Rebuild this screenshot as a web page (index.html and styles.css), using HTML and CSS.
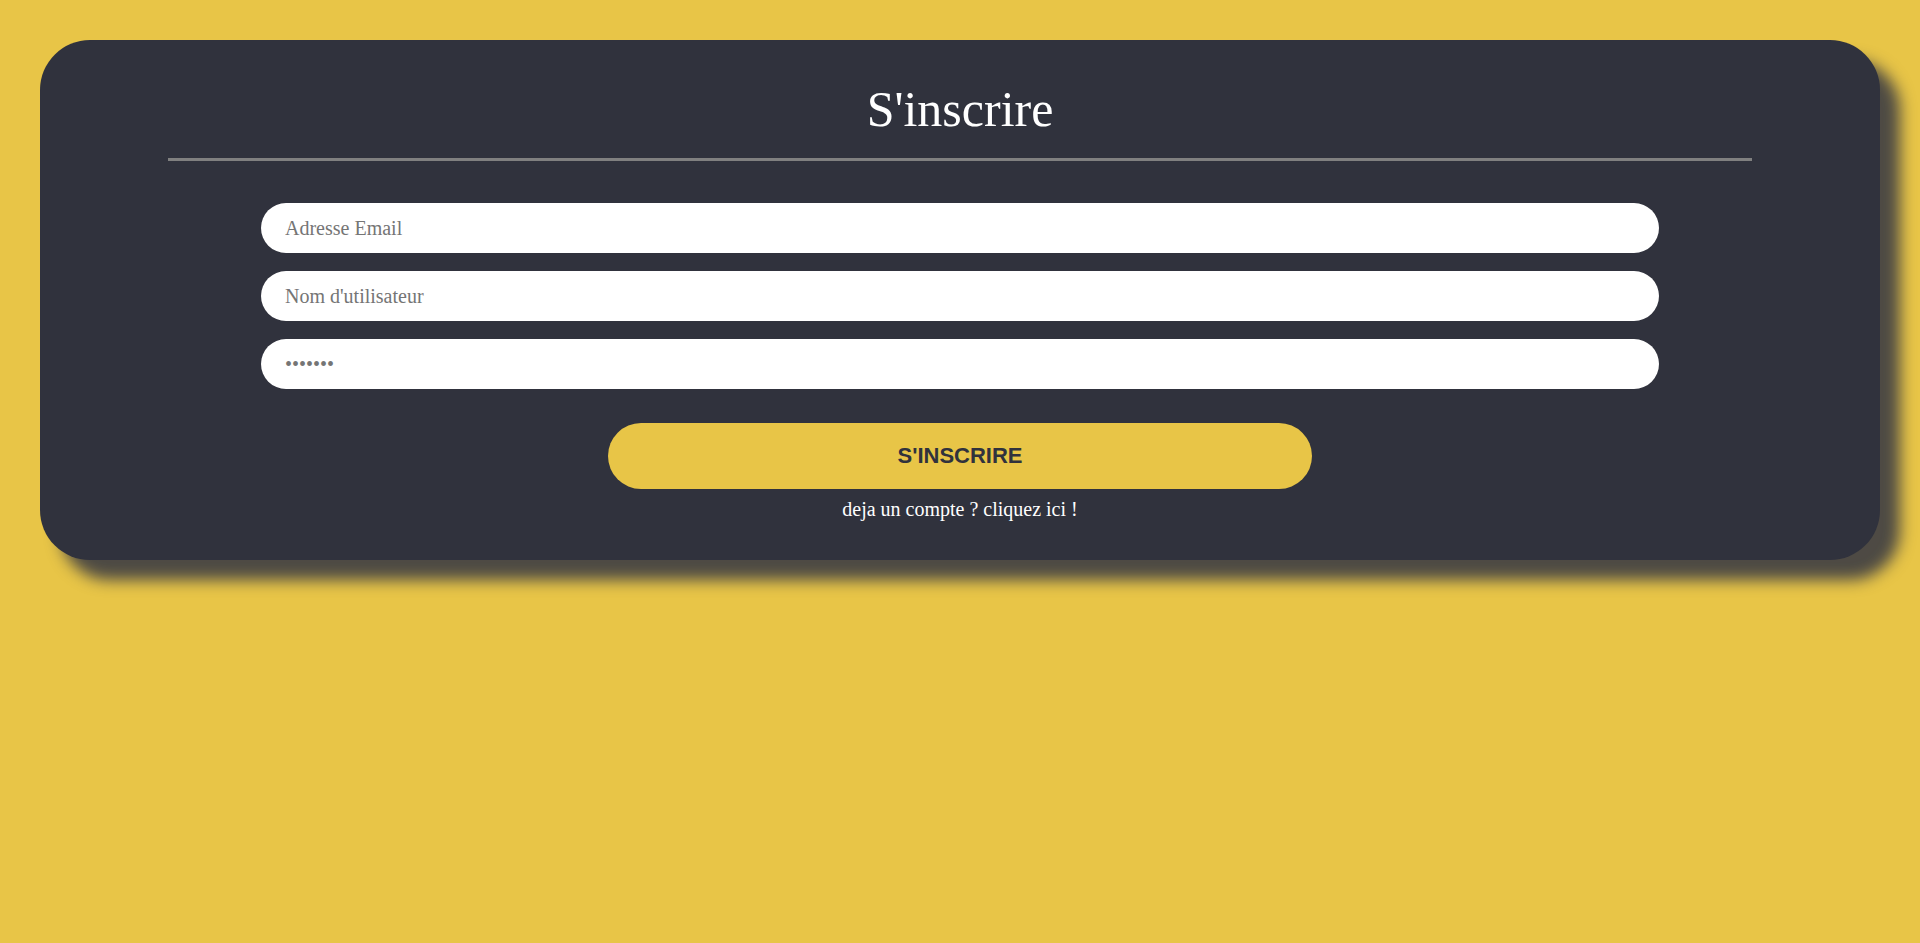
FILE: index.html
```html
<!DOCTYPE html>
<html lang="fr">
<head>
<meta charset="utf-8">
<title>S'inscrire</title>
<link rel="stylesheet" href="styles.css">
</head>
<body>
  <main class="card">
    <h1 class="title">S'inscrire</h1>
    <hr class="divider">
    <form class="form">
      <input class="field" type="email" placeholder="Adresse Email">
      <input class="field" type="text" placeholder="Nom d'utilisateur">
      <input class="field" type="password" placeholder="•••••••">
      <button class="submit" type="button">S'INSCRIRE</button>
      <a class="login-link" href="#">deja un compte ? cliquez ici !</a>
    </form>
  </main>
</body>
</html>
```

FILE: styles.css
```css
html, body {
  margin: 0;
  padding: 0;
}

body {
  background: #e8c547;
  padding: 40px;
  min-height: 943px;
  box-sizing: border-box;
  font-family: "Liberation Serif", "Times New Roman", serif;
}

.card {
  background: #30323d;
  border-radius: 50px;
  padding: 40px 0 39px;
  text-align: center;
  box-shadow: 20px 20px 15px rgba(72, 70, 68, 0.97);
}

.title {
  margin: 0;
  font-family: "Liberation Serif", "Times New Roman", serif;
  font-weight: normal;
  font-size: 50px;
  line-height: 58px;
  color: #ffffff;
}

.divider {
  border: none;
  height: 3px;
  background: #808080;
  margin: 20px 128px 0;
}

.form {
  width: 1398px;
  margin: 42px auto 0;
  display: flex;
  flex-direction: column;
  gap: 18px;
}

.field {
  display: block;
  box-sizing: border-box;
  width: 100%;
  height: 50px;
  border: none;
  border-radius: 25px;
  padding: 0 24px;
  background: #ffffff;
  font-family: "Liberation Serif", "Times New Roman", serif;
  font-size: 20px;
  color: #333;
  outline: none;
}

.field::placeholder {
  color: #757575;
  opacity: 1;
}

.submit {
  align-self: center;
  margin-top: 16px;
  width: 704px;
  height: 66px;
  border: none;
  border-radius: 33px;
  background: #e8c547;
  color: #30323d;
  font-family: "Liberation Sans", Arial, sans-serif;
  font-weight: bold;
  font-size: 22px;
  cursor: pointer;
}

.login-link {
  margin-top: -9px;
  display: block;
  font-size: 20px;
  line-height: 23px;
  color: #ffffff;
  text-decoration: none;
}
```
